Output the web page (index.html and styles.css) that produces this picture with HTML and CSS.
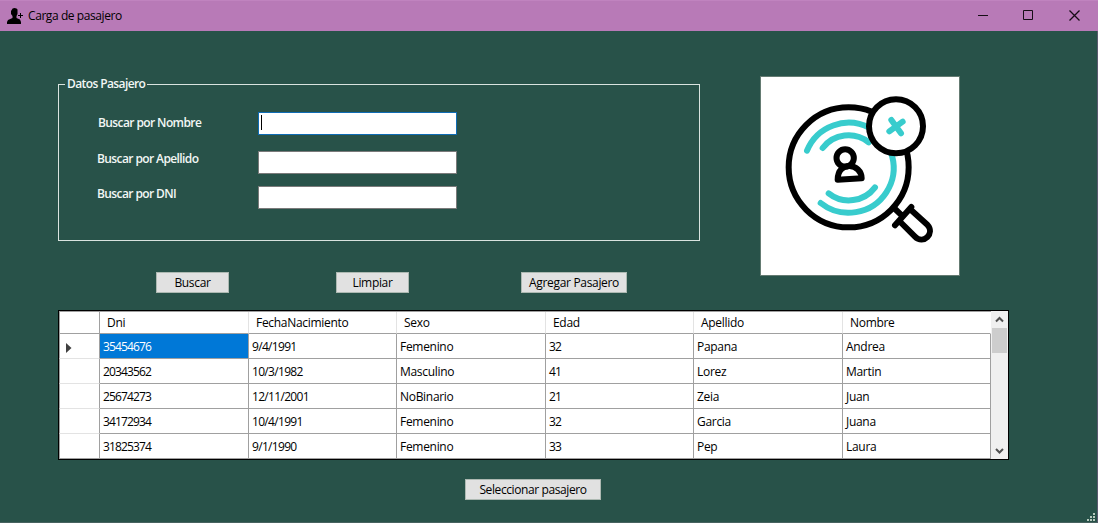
FILE: index.html
```html
<!DOCTYPE html>
<html lang="es">
<head>
<meta charset="utf-8">
<title>Carga de pasajero</title>
<link rel="stylesheet" href="styles.css">
</head>
<body>
<div class="window">
  <header class="titlebar">
    <svg class="app-icon" width="16" height="16" viewBox="0 0 16 16"><path d="M5 1.500Q5 0 7.500 0T10.500 1.500V6L9.500 8v2l3.500 1.500 1 2.500v2H0v-2l1-2 4.500-2V8L4 6V3z"/><path d="M11 7h5v1h-5zM13 5h1v5h-1z" shape-rendering="crispEdges"/></svg>
    <span class="title">Carga de pasajero</span>
    <div class="controls">
      <svg width="46" height="31" viewBox="0 0 46 31"><path d="M18 14.500h10"/></svg>
      <svg width="46" height="31" viewBox="0 0 46 31"><path d="M17.500 9.500h9v9h-9z"/></svg>
      <svg width="46" height="31" viewBox="0 0 46 31"><path d="M17.500 9.500l10 10M27.500 9.500l-10 10" stroke-width="1.300"/></svg>
    </div>
  </header>
  <main class="client">
    <section class="top">
      <div class="group">
        <div class="legend"><i class="rule stub"></i><span class="legend-text">Datos Pasajero</span><i class="rule rest"></i></div>
        <div class="fields">
          <label class="field"><span class="name first">Buscar por Nombre</span><span class="box focus"><i class="caret"></i></span></label>
          <label class="field second"><span class="name">Buscar por Apellido</span><span class="box"></span></label>
          <label class="field third"><span class="name dni">Buscar por DNI</span><span class="box"></span></label>
        </div>
      </div>
      <div class="picture">
        <svg width="198" height="198" viewBox="33 21 594 594" fill="none" stroke="#000" stroke-width="18" stroke-linecap="round" stroke-linejoin="round">
          <circle cx="296" cy="292" r="180"/>
          <g stroke="#38cccd">
            <path d="M171 242A135 135 0 1 1 212 399"/>
            <path d="M218 234A98 98 0 0 1 356 217M236 370A98 98 0 0 0 375 352"/>
          </g>
          <circle cx="438" cy="169" r="81" fill="#fff"/>
          <path d="M424 150l29 40M458 155l-40 29" stroke="#38cccd" stroke-width="18"/>
          <circle cx="285.500" cy="264" r="26" />
          <path d="M263 329l72-4c0-45-72-55-72 4z"/>
          <path d="M432 414l24 23M435 466l49-55M451 456l44 44c25 25 61-10 37-36l-48-43"/>
        </svg>
      </div>
    </section>
    <div class="actions">
      <button class="btn">Buscar</button>
      <button class="btn clear">Limpiar</button>
      <button class="btn add">Agregar Pasajero</button>
    </div>
    <div class="table">
      <div class="grid">
        <div class="cell head rh"></div><div class="cell head first">Dni</div><div class="cell head wide">FechaNacimiento</div><div class="cell head">Sexo</div><div class="cell head">Edad</div><div class="cell head">Apellido</div><div class="cell head last">Nombre</div>
        <div class="cell rh"><svg width="6" height="10" viewBox="0 0 6 10"><path d="M0 0l5.500 5L0 10z" fill="#404040"/></svg></div><div class="cell num selected">35454676</div><div class="cell num date">9/4/1991</div><div class="cell">Femenino</div><div class="cell num">32</div><div class="cell">Papana</div><div class="cell">Andrea</div>
        <div class="cell rh"></div><div class="cell num">20343562</div><div class="cell num date">10/3/1982</div><div class="cell">Masculino</div><div class="cell num">41</div><div class="cell">Lorez</div><div class="cell">Martin</div>
        <div class="cell rh"></div><div class="cell num">25674273</div><div class="cell num date">12/11/2001</div><div class="cell">NoBinario</div><div class="cell num">21</div><div class="cell">Zeia</div><div class="cell">Juan</div>
        <div class="cell rh"></div><div class="cell num">34172934</div><div class="cell num date">10/4/1991</div><div class="cell">Femenino</div><div class="cell num">32</div><div class="cell">Garcia</div><div class="cell">Juana</div>
        <div class="cell rh end"></div><div class="cell num">31825374</div><div class="cell num date">9/1/1990</div><div class="cell">Femenino</div><div class="cell num">33</div><div class="cell">Pep</div><div class="cell">Laura</div>
      </div>
      <div class="scroll">
        <svg width="17" height="17" viewBox="0 0 17 17"><path d="M5 10.500l3.500-3.500 3.500 3.500"/></svg>
        <i class="thumb"></i>
        <svg class="down" width="17" height="17" viewBox="0 0 17 17"><path d="M5 7l3.500 3.500L12 7"/></svg>
      </div>
    </div>
    <button class="btn choose">Seleccionar pasajero</button>
    <svg class="grip" width="8" height="8" viewBox="0 0 8 8" shape-rendering="crispEdges"><path d="M6 0h2v2H6zM3 3h2v2H3zM6 3h2v2H6zM0 6h2v2H0zM3 6h2v2H3zM6 6h2v2H6z" fill="#b6c9bd"/></svg>
  </main>
</div>
</body>
</html>
```
FILE: styles.css
```css
* { box-sizing: border-box; }
body { margin: 0; font: 12px/16px "Open Sans", "Noto Sans", sans-serif; letter-spacing: -0.3px; color: #000; }
.window { width: 1098px; height: 523px; background: #285249; overflow: hidden; display: flex; flex-direction: column; }
.titlebar { height: 31px; flex: none; background: #b87ab7; border-top: 1px solid #c083bf; display: flex; align-items: center; padding-left: 7px; }
.app-icon { flex: none; }
.title { margin-left: 5px; letter-spacing: -0.42px; }
.controls { margin-left: auto; display: flex; height: 31px; }
.controls svg { fill: none; stroke: #160d16; stroke-width: 1; }
.client { height: 492px; border-right: 1px solid #5c5a70; border-bottom: 1px solid #47625f; padding: 45px 0 0 58px; position: relative; }
.top { display: flex; height: 200px; }
.group { width: 642px; height: 165px; flex: none; display: flex; flex-direction: column; }
.legend { display: flex; height: 16px; align-items: center; color: #f2f7f5; font-weight: 600; letter-spacing: -0.6px; }
.rule { height: 1px; background: #d9e3df; margin-top: 1px; }
.stub { width: 7px; }
.legend-text { width: 82px; padding-left: 2px; white-space: nowrap; }
.rest { flex: 1; }
.fields { flex: 1; margin-top: -8px; border: 1px solid #d9e3df; border-top: 0; padding: 28px 0 0 38px; }
.field { display: flex; height: 23px; align-items: center; color: #f2f7f5; font-weight: 600; letter-spacing: -0.6px; }
.second { margin-top: 16px; }
.third { margin-top: 12px; }
.name { width: 161px; padding-bottom: 8px; }
.name.first { padding: 0 0 1px 1px; }
.name.dni { padding-bottom: 7px; }
.box { width: 199px; height: 23px; background: #fff; border: 1px solid #7a7a7a; }
.focus { border-color: #0f6cb5; padding: 2px; }
.caret { display: block; width: 1px; height: 15px; background: #000; }
.picture { width: 200px; height: 200px; margin-left: 60px; border: 1px solid #647b72; background: #fff; }
.picture svg { display: block; }
.actions { display: flex; margin: -4px 0 0 98px; }
.btn { height: 21px; width: 73px; padding: 0; font: inherit; letter-spacing: -0.32px; color: #000; background: #e1e1e1; border: 1px solid #adb9b2; display: block; white-space: nowrap; }
.clear { margin-left: 107px; }
.add { width: 106px; margin-left: 112px; }
.table { width: 951px; height: 150px; margin-top: 17px; border: 1px solid #000; display: flex; background: #fff; }
.grid { width: 932px; border-top: 1px solid #a0a0a0; display: grid; grid-template-columns: 41px 149px 148px 149px 148px 149px 148px; grid-template-rows: 22px repeat(5, 25px); }
.cell { border-right: 1px solid #a0a0a0; border-bottom: 1px solid #a0a0a0; padding: 5px 0 0 3px; white-space: nowrap; }
.head { padding: 3px 0 0 7px; border-right-color: #e3e3e3; }
.last { border-right-color: #fff; }
.rh { border-left: 1px solid #a0a0a0; border-right-color: #a0a0a0; border-bottom-color: #e3e3e3; padding: 9px 0 0 6px; }
.rh svg { display: block; }
.head.rh { border-bottom-color: #a0a0a0; }
.end { border-bottom-color: #a0a0a0; }
.num { letter-spacing: -0.85px; }
.date { letter-spacing: -0.68px; }
.selected { background: #0078d7; color: #fff; }
.scroll { width: 17px; background: #f0f0f0; display: flex; flex-direction: column; }
.scroll svg { flex: none; fill: none; stroke: #505050; stroke-width: 2; }
.thumb { width: 15px; height: 25px; margin-left: 1px; background: #cdcdcd; }
.down { margin-top: auto; }
.choose { width: 136px; margin: 19px 0 0 407px; letter-spacing: -0.4px; }
.grip { position: absolute; right: 2px; bottom: 1px; }
```
